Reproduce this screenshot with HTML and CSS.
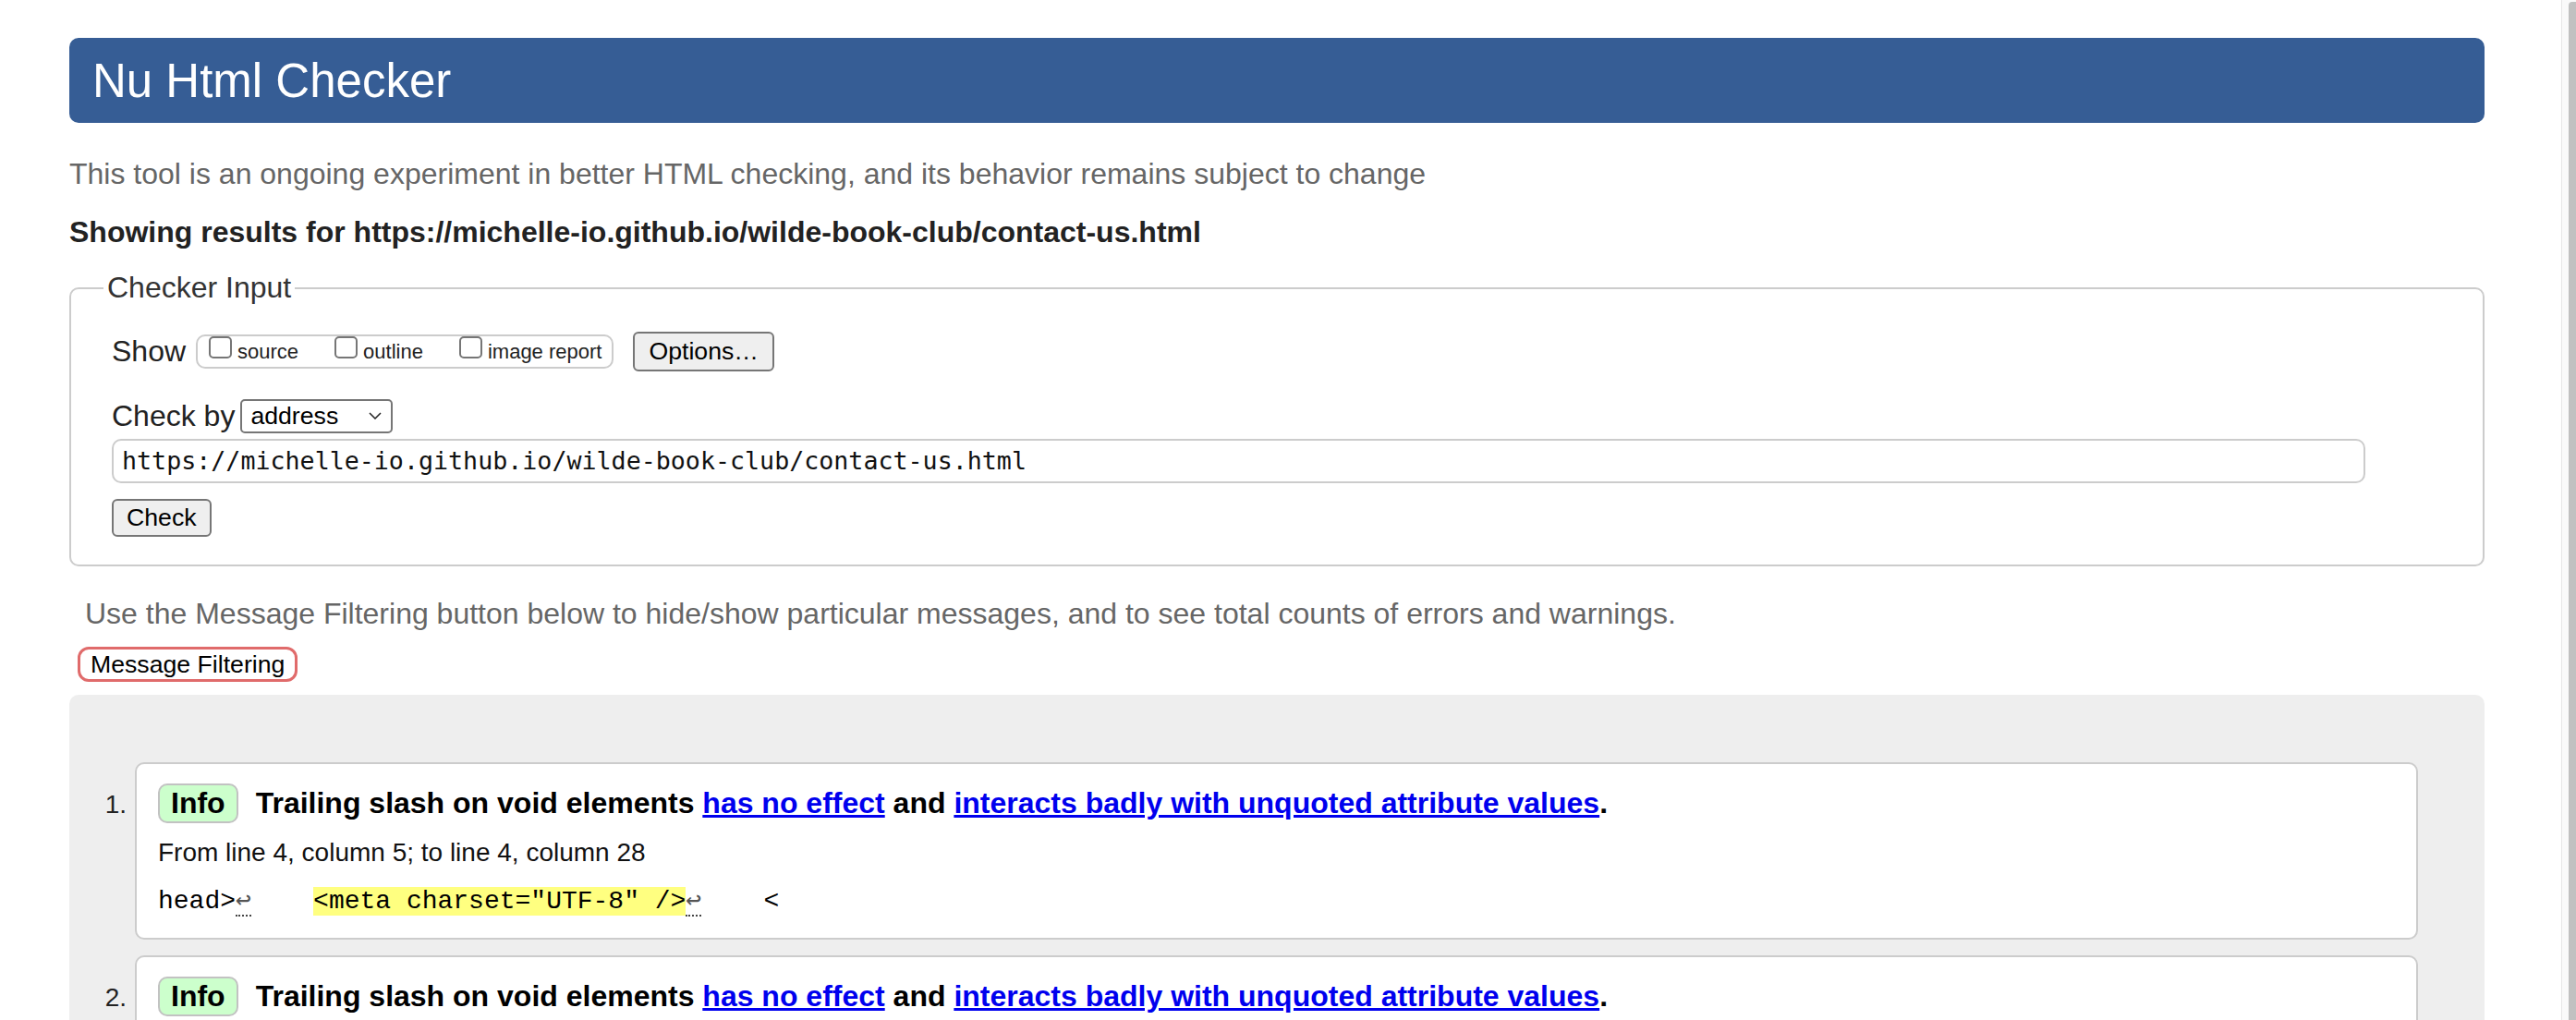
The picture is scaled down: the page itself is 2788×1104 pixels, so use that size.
FILE: index.html
```html
<!DOCTYPE html>
<html lang="en">
<head>
<meta charset="utf-8">
<title>Nu Html Checker</title>
<link rel="stylesheet" href="styles.css">
</head>
<body>
<div class="page">
  <h1 class="title">Nu Html Checker</h1>
  <p class="intro">This tool is an ongoing experiment in better HTML checking, and its behavior remains subject to change</p>
  <p class="showing">Showing results for https://michelle-io.github.io/wilde-book-club/contact-us.html</p>

  <fieldset class="checker">
    <legend>Checker Input</legend>
    <div class="row row-show">
      <span class="row-label">Show</span>
      <span class="checks"><label class="chk"><span class="box"></span>source</label><label class="chk"><span class="box"></span>outline</label><label class="chk last"><span class="box"></span>image report</label></span>
      <button class="btn btn-options" type="button">Options…</button>
    </div>
    <div class="row row-by">
      <span class="row-label">Check by</span>
      <span class="select"><span class="select-text">address</span><svg class="chev" width="14" height="8" viewBox="0 0 14 8"><polyline points="1,1 7,7 13,1" fill="none" stroke="#222" stroke-width="1.5"/></svg></span>
    </div>
    <div class="url-input">https://michelle-io.github.io/wilde-book-club/contact-us.html</div>
    <div class="row-check"><button class="btn btn-check" type="button">Check</button></div>
  </fieldset>

  <p class="filter-note">Use the Message Filtering button below to hide/show particular messages, and to see total counts of errors and warnings.</p>
  <button class="filter-btn" type="button">Message Filtering</button>

  <div class="results">
    <ol class="messages">
      <li class="msg">
        <span class="num">1.</span>
        <div class="msg-box">
          <p class="msg-head"><span class="badge">Info</span><span class="msg-text">Trailing slash on void elements <a href="#">has no effect</a> and <a href="#">interacts badly with unquoted attribute values</a>.</span></p>
          <p class="location">From line 4, column 5; to line 4, column 28</p>
          <p class="extract">head&gt;<span class="lf">↩</span>    <span class="hl">&lt;meta charset="UTF-8" /&gt;</span><span class="lf">↩</span>    &lt;</p>
        </div>
      </li>
      <li class="msg">
        <span class="num">2.</span>
        <div class="msg-box">
          <p class="msg-head"><span class="badge">Info</span><span class="msg-text">Trailing slash on void elements <a href="#">has no effect</a> and <a href="#">interacts badly with unquoted attribute values</a>.</span></p>
          <p class="location">From line 5, column 5; to line 5, column 74</p>
          <p class="extract">/&gt;<span class="lf">↩</span>    <span class="hl">&lt;meta name="viewport" content="width=device-width, initial-scale=1.0" /&gt;</span><span class="lf">↩</span>    &lt;</p>
        </div>
      </li>
    </ol>
  </div>
</div>
<div class="scrollbar"><div class="thumb"></div></div>
</body>
</html>
```

FILE: styles.css
```css
html, body {
  margin: 0;
  padding: 0;
  overflow: hidden;
  background: #fff;
}

body {
  font-family: "Liberation Sans", Arial, sans-serif;
  color: #222;
  height: 1104px;
}

.page {
  margin: 0 99px 0 75px;
}

.title {
  margin: 41px 0 0;
  height: 92px;
  box-sizing: border-box;
  padding: 0 25px;
  display: flex;
  align-items: center;
  background: #365d95;
  color: #fff;
  border-radius: 10px;
  font-size: 51px;
  font-weight: normal;
  line-height: 1;
}

.intro {
  margin: 37px 0 0;
  font-size: 32px;
  line-height: 37px;
  color: #666;
}

.showing {
  margin: 26px 0 0;
  font-size: 32px;
  line-height: 37px;
  font-weight: bold;
  color: #222;
}

.checker {
  margin: 23px 0 0;
  padding: 0 44px 30px;
  border: 2px solid #ccc;
  border-radius: 10px;
  min-width: 0;
}

.checker legend {
  font-size: 32px;
  line-height: 37px;
  color: #333;
  padding: 0 4px;
  margin-left: -9px;
}

.row {
  display: flex;
  align-items: center;
  font-size: 32px;
  color: #222;
}

.row-show {
  height: 50px;
  margin-top: 25px;
}

.row-by {
  height: 40px;
  margin-top: 25px;
}

.checks {
  display: inline-block;
  box-sizing: border-box;
  height: 37px;
  margin-left: 11px;
  padding: 0 11px 0 4px;
  border: 2px solid #ccc;
  border-radius: 10px;
  font-size: 22px;
  line-height: 33px;
  color: #222;
  white-space: nowrap;
}

.chk {
  margin-right: 31px;
}

.chk.last {
  margin-right: 0;
}

.box {
  display: inline-block;
  box-sizing: border-box;
  width: 25px;
  height: 24px;
  margin: 0 6px 0 8px;
  border: 2px solid #767676;
  border-radius: 5px;
  background: #fff;
  vertical-align: baseline;
}

.btn {
  font-family: "Liberation Sans", Arial, sans-serif;
  font-size: 26.67px;
  line-height: 31px;
  color: #000;
  background: #efefef;
  border: 2px solid #767676;
  border-radius: 6px;
  box-sizing: border-box;
}

.btn-options {
  margin-left: 21px;
  height: 43px;
  padding: 0 15px;
}

.select {
  display: inline-flex;
  align-items: center;
  justify-content: space-between;
  box-sizing: border-box;
  width: 165px;
  height: 37px;
  margin-left: 6px;
  padding: 0 10px 0 9px;
  border: 2px solid #767676;
  border-radius: 5px;
  font-size: 26.67px;
  color: #000;
}

.chev {
  display: block;
}

.url-input {
  box-sizing: border-box;
  width: 2439px;
  height: 48px;
  margin-top: 5px;
  padding: 0 9px;
  border: 2px solid #ccc;
  border-radius: 10px;
  font-family: "DejaVu Sans Mono", "Liberation Mono", monospace;
  font-size: 26.67px;
  line-height: 44px;
  color: #111;
  white-space: nowrap;
}

.row-check {
  margin-top: 17px;
  height: 41px;
}

.btn-check {
  height: 41px;
  padding: 0 14px;
}

.filter-note {
  margin: 33px 0 0;
  padding-left: 17px;
  font-size: 32px;
  line-height: 37px;
  color: #666;
}

.filter-btn {
  display: block;
  margin: 17px 0 0 9px;
  height: 38px;
  box-sizing: border-box;
  padding: 0 11px;
  background: #fff;
  border: 3px solid #e06b6b;
  border-radius: 12px;
  font-family: "Liberation Sans", Arial, sans-serif;
  font-size: 26.67px;
  line-height: 30px;
  color: #000;
}

.results {
  margin-top: 14px;
  min-height: 500px;
  padding: 73px 72px 0 0;
  background: #eee;
  border-radius: 10px 10px 0 0;
}

.messages {
  margin: 0;
  padding: 0;
  list-style: none;
}

.msg {
  display: flex;
  align-items: flex-start;
  margin-bottom: 17px;
}

.num {
  flex: 0 0 71px;
  box-sizing: border-box;
  margin-top: 24px;
  padding-right: 9px;
  text-align: right;
  font-size: 28px;
  line-height: 43px;
  color: #222;
}

.msg-box {
  flex: 1;
  min-width: 0;
  background: #fff;
  border: 2px solid #ccc;
  border-radius: 10px;
  padding: 21px 23px 19px;
}

.msg-head {
  margin: 0;
  font-size: 32px;
  line-height: 43px;
  font-weight: bold;
  color: #000;
  white-space: nowrap;
}

.badge {
  display: inline-block;
  vertical-align: top;
  box-sizing: border-box;
  height: 43px;
  padding: 0 12px;
  margin-right: 19px;
  line-height: 39px;
  background: #ccffcc;
  border: 2px solid #c2c2c2;
  border-radius: 10px;
}

.msg-head a {
  color: #0000ee;
  text-decoration: underline;
}

.location {
  margin: 12px 0 0;
  font-size: 28px;
  line-height: 40px;
  color: #111;
}

.extract {
  margin: 11px 0 0;
  font-family: "Liberation Mono", "Courier New", monospace;
  font-size: 28px;
  line-height: 40px;
  color: #000;
  white-space: pre;
}

.lf {
  font-family: "DejaVu Sans Mono", monospace;
  color: #555;
  border-bottom: 2px dotted #444;
}

.hl {
  background: #ffff80;
}

.scrollbar {
  position: fixed;
  top: 0;
  right: 0;
  bottom: 0;
  width: 16px;
  box-sizing: border-box;
  border-left: 1px solid #e6e6e6;
  background: #fafafa;
}

.thumb {
  position: absolute;
  top: 2px;
  left: 7px;
  right: 0;
  bottom: 0;
  background: #c1c1c1;
  border-radius: 4px 0 0 0;
}
```
